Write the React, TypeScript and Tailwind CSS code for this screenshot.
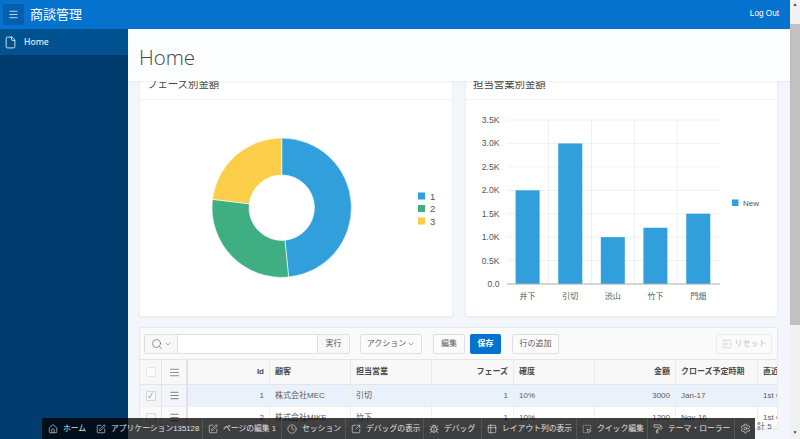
import {
  AlignJustify,
  Bug,
  ChevronDown,
  Clock,
  File,
  Home,
  Menu,
  PaintRoller,
  Search,
  Settings,
  SquareArrowLeft,
  SquareArrowOutUpRight,
  SquareDashedMousePointer,
  SquarePen,
  Table2,
} from 'lucide-react';

const FONT = "font-['Liberation_Sans','Noto_Sans_CJK_JP',sans-serif]";
const GRID_COLS = 'grid grid-cols-[22px_26px_82px_81px_81px_82px_81px_81px_82px_81px] w-[719px]';

const devItems = [
  { icon: Home, label: 'ホーム', cls: 'w-[49px] pl-[6px]' },
  { icon: SquarePen, label: 'アプリケーション135128', cls: 'w-[112px] pl-[5px] border-r border-[#555]' },
  { icon: SquarePen, label: 'ページの編集 1', cls: 'w-[79px] pl-[5px] border-r border-[#555]' },
  { icon: Clock, label: 'セッション', cls: 'w-[64px] pl-[5px] border-r border-[#555]' },
  { icon: SquareArrowOutUpRight, label: 'デバッグの表示', cls: 'w-[78px] pl-[5px] border-r border-[#555]' },
  { icon: Bug, label: 'デバッグ', cls: 'w-[58px] pl-[5px] border-r border-[#555]' },
  { icon: Table2, label: 'レイアウト列の表示', cls: 'w-[95px] pl-[5px] border-r border-[#555]' },
  { icon: SquareDashedMousePointer, label: 'クイック編集', cls: 'w-[71px] pl-[5px] border-r border-[#555]' },
  { icon: PaintRoller, label: 'テーマ・ローラー', cls: 'w-[87px] pl-[5px] border-r border-[#555]' },
];

const rows = [
  { id: 1, customer: '株式会社MEC', owner: '引切', phase: 1, rate: '10%', amount: 3000, close: 'Jan-17', recent: '1st Q' },
  { id: 2, customer: '株式会社MIKE', owner: '竹下', phase: 1, rate: '10%', amount: 1200, close: 'Nov-16', recent: '1st Q' },
];

const columns = [
  { label: 'Id', align: 'justify-end' },
  { label: '顧客', align: 'justify-start' },
  { label: '担当営業', align: 'justify-start' },
  { label: 'フェーズ', align: 'justify-end' },
  { label: '確度', align: 'justify-start' },
  { label: '金額', align: 'justify-end' },
  { label: 'クローズ予定時期', align: 'justify-start' },
  { label: '直近', align: 'justify-start' },
];

function arc(start: number, end: number, r1: number, r2: number) {
  const pt = (deg: number, r: number) => {
    const a = ((deg - 90) * Math.PI) / 180;
    return `${(Math.cos(a) * r).toFixed(2)} ${(Math.sin(a) * r).toFixed(2)}`;
  };
  const large = end - start > 180 ? 1 : 0;
  return `M${pt(start, r2)} A${r2} ${r2} 0 ${large} 1 ${pt(end, r2)} L${pt(end, r1)} A${r1} ${r1} 0 ${large} 0 ${pt(start, r1)} Z`;
}

function DonutChart() {
  const legend = [
    { label: '1', color: '#309fdb', y: 196 },
    { label: '2', color: '#3fae82', y: 208.5 },
    { label: '3', color: '#fbce4a', y: 221 },
  ];
  return (
    <svg width="314" height="216" viewBox="139 100 314 216" className="block">
      <g transform="translate(281.7 207.7)" stroke="#ffffff" strokeWidth="0.6">
        <path d={arc(0, 174.3, 32.7, 69.7)} fill="#309fdb" />
        <path d={arc(174.3, 276.9, 32.7, 69.7)} fill="#3fae82" />
        <path d={arc(276.9, 360, 32.7, 69.7)} fill="#fbce4a" />
      </g>
      {legend.map((l) => (
        <g key={l.label}>
          <rect x="418" y={l.y - 3.5} width="7" height="7" fill={l.color} />
          <text x="430" y={l.y + 3.5} fontSize="9.5" fill="#555" fontFamily="Liberation Sans">
            {l.label}
          </text>
        </g>
      ))}
    </svg>
  );
}

function BarChart() {
  const ticks = ['0.0', '0.5K', '1.0K', '1.5K', '2.0K', '2.5K', '3.0K', '3.5K'];
  const bars = [
    { label: '井下', value: 2000, x: 515.6 },
    { label: '引切', value: 3000, x: 558.3 },
    { label: '渋山', value: 1000, x: 600.8 },
    { label: '竹下', value: 1200, x: 643.4 },
    { label: '門畑', value: 1500, x: 686.3 },
  ];
  const y0 = 284;
  const perK = 164 / 3.5;
  return (
    <svg width="313" height="216" viewBox="465 100 313 216" className="block">
      {ticks.map((t, i) => (
        <g key={t}>
          {i > 0 && <line x1="507" x2="720" y1={y0 - i * 0.5 * perK} y2={y0 - i * 0.5 * perK} stroke="#eef0f2" strokeWidth="1" />}
          <text x="499.5" y={y0 - i * 0.5 * perK + 3} textAnchor="end" fontSize="8.6" fill="#555" fontFamily="Liberation Sans">
            {t}
          </text>
        </g>
      ))}
      {[548.5, 591.5, 634.5, 677].map((x) => (
        <line key={x} x1={x} x2={x} y1="120" y2={y0} stroke="#eef0f2" strokeWidth="1" />
      ))}
      {bars.map((b) => (
        <g key={b.label}>
          <rect x={b.x} y={y0 - (b.value / 1000) * perK} width="24" height={(b.value / 1000) * perK} fill="#309fdb" />
          <text x={b.x + 12} y="299" textAnchor="middle" fontSize="8" fill="#555" fontFamily="Noto Sans CJK JP">
            {b.label}
          </text>
        </g>
      ))}
      <line x1="507" x2="720" y1={y0} y2={y0} stroke="#a9abad" strokeWidth="1" />
      <rect x="732" y="199.5" width="6.5" height="6.5" fill="#309fdb" />
      <text x="743" y="205.5" fontSize="8" fill="#555" fontFamily="Liberation Sans">
        New
      </text>
    </svg>
  );
}

function ChartCard({ title, children }: { title: string; children: React.ReactNode }) {
  return (
    <section className="bg-white border border-[#eaeff3] rounded-[1px] shadow-[0_1px_2px_rgba(0,0,0,0.04)]">
      <h2 className="h-[31px] pl-[7px] pt-[2px] flex items-center border-b border-[#f0f2f4] text-[10.4px] text-[#444] font-normal">
        {title}
      </h2>
      <div className="-ml-px">{children}</div>
    </section>
  );
}

function ToolButton({ children, className = '' }: { children: React.ReactNode; className?: string }) {
  return (
    <button className={`h-[20px] flex items-center justify-center border border-[#dfdfdf] bg-[#fbfbfb] text-[8px] text-[#5a5a5a] rounded-[2px] ${className}`}>
      {children}
    </button>
  );
}

function DataGrid() {
  return (
    <section className="mt-[10px] bg-white border border-[#e6ebef] overflow-hidden">
      <div className="h-[31px] flex items-center bg-[#fafafa] pl-[4px]">
        <div className="w-[206px] h-[20px] flex border border-[#dfdfdf] rounded-[2px] bg-white">
          <div className="w-[33px] flex items-center justify-center gap-[1px] bg-[#f8f8f8] border-r border-[#dfdfdf] text-[#666]">
            <Search size={12} strokeWidth={1.4} />
            <ChevronDown size={8} strokeWidth={1.6} />
          </div>
          <div className="flex-1" />
          <div className="w-[32px] flex items-center justify-center bg-[#f8f8f8] border-l border-[#dfdfdf] text-[8px] text-[#5a5a5a]">
            実行
          </div>
        </div>
        <ToolButton className="ml-[10px] w-[62px] gap-[1px]">
          アクション
          <ChevronDown size={8} strokeWidth={1.6} />
        </ToolButton>
        <ToolButton className="ml-[11px] w-[32px]">編集</ToolButton>
        <button className="ml-[5px] w-[31px] h-[20px] bg-[#0572ce] text-white text-[8px] font-bold rounded-[2px]">保存</button>
        <ToolButton className="ml-[11px] w-[47px]">行の追加</ToolButton>
        <ToolButton className="ml-[157px] w-[56px] gap-[3px] text-[#bdbdbd] border-[#ececec]">
          <SquareArrowLeft size={10} strokeWidth={1.3} />
          リセット
        </ToolButton>
      </div>
      <div className={`${GRID_COLS} h-[26px] bg-[#f8f8f8] border-y border-[#e4e4e4]`}>
        <div className="flex items-center justify-center border-r border-[#e4e4e4]">
          <span className="w-[10px] h-[10px] bg-white border border-[#e6e6e6] rounded-[1px]" />
        </div>
        <div className="flex items-center justify-center border-r-2 border-[#e0e0e0]">
          <AlignJustify size={11} className="text-[#888]" strokeWidth={2} />
        </div>
        {columns.map((c) => (
          <div key={c.label} className={`flex items-center px-[5px] border-r border-[#e8e8e8] text-[8px] font-bold text-[#4a4a4a] whitespace-nowrap ${c.align}`}>
            {c.label}
          </div>
        ))}
      </div>
      {rows.map((r, i) => {
        const sel = i === 0;
        const side = `flex items-center justify-center ${sel ? 'bg-[#f2f5f9]' : 'bg-[#fafafa]'}`;
        const td = `flex items-center px-[5px] border-r border-[#eeeeee] text-[8px] text-[#5a5a5a] whitespace-nowrap overflow-hidden ${sel ? 'bg-[#e9f1fc]' : 'bg-white'}`;
        return (
          <div key={r.id} className={`${GRID_COLS} h-[22px] border-b border-[#eeeeee]`}>
            <div className={`${side} border-r border-[#e4e4e4]`}>
              <span className="w-[10px] h-[10px] flex items-center justify-center bg-[#f8f8f8] border border-[#d6d6d6] rounded-[1px] text-[7px] leading-none text-[#888]">
                {sel ? '✓' : ''}
              </span>
            </div>
            <div className={`${side} border-r-2 border-[#e0e0e0]`}>
              <Menu size={11} className="text-[#555]" strokeWidth={1.6} />
            </div>
            <div className={`${td} justify-end`}>{r.id}</div>
            <div className={td}>{r.customer}</div>
            <div className={td}>{r.owner}</div>
            <div className={`${td} justify-end`}>{r.phase}</div>
            <div className={td}>{r.rate}</div>
            <div className={`${td} justify-end`}>{r.amount}</div>
            <div className={td}>{r.close}</div>
            <div className={td}>{r.recent}</div>
          </div>
        );
      })}
    </section>
  );
}

function DevBar() {
  return (
    <div className="absolute left-[42px] bottom-0 h-[21px] w-[713px] flex items-center bg-black/75 text-[#e0e0e0] text-[7.8px] whitespace-nowrap">
      {devItems.map((item) => {
        const Icon = item.icon;
        return (
          <div key={item.label} className={`h-full shrink-0 flex items-center gap-[5px] ${item.cls}`}>
            <Icon size={10} strokeWidth={1.5} />
            <span>{item.label}</span>
          </div>
        );
      })}
      <div className="h-full w-[20px] shrink-0 flex items-center justify-center">
        <Settings size={11} strokeWidth={1.5} />
      </div>
    </div>
  );
}

export default function App() {
  return (
    <div className={`relative w-[800px] h-[439px] flex overflow-hidden bg-[#f3f7fb] ${FONT}`}>
      <div className="w-[790px] flex flex-col">
        <header className="h-[29px] shrink-0 flex items-center bg-[#0572ce] text-white pl-[3px] pr-[11px]">
          <button className="w-[21px] h-[21px] flex items-center justify-center bg-[#055fac] rounded-[1px]">
            <Menu size={11} strokeWidth={1.6} />
          </button>
          <span className="ml-[6px] text-[13px]">商談管理</span>
          <span className="ml-auto text-[8.2px]">Log Out</span>
        </header>
        <div className="flex-1 min-h-0 flex">
          <aside className="w-[128px] shrink-0 bg-[#003c6d]">
            <div className="h-[26px] flex items-center bg-[#00518f] text-white pl-[4px] gap-[7px]">
              <File size={13} strokeWidth={1.5} />
              <span className="font-['Noto_Sans',sans-serif] font-medium text-[8.6px] text-[#e4eef6]">Home</span>
            </div>
          </aside>
          <main className="flex-1 min-w-0 flex flex-col">
            <div className="relative z-10 h-[52px] shrink-0 flex items-center pl-[11px] pt-[4px] bg-[#fcfdfe] shadow-[0_1px_2px_rgba(0,0,0,0.06)]">
              <h1 className="font-['Open_Sans','Liberation_Sans',sans-serif] font-light text-[20.5px] text-[#444]">Home</h1>
            </div>
            <div className="flex-1 min-h-0 overflow-hidden pl-[11px] pr-[12px]">
              <div className="-mt-[13px]">
                <div className="grid grid-cols-[314px_313px] gap-x-[12px]">
                  <ChartCard title="フェーズ別金額">
                    <DonutChart />
                  </ChartCard>
                  <ChartCard title="担当営業別金額">
                    <BarChart />
                  </ChartCard>
                </div>
                <DataGrid />
              </div>
            </div>
          </main>
        </div>
      </div>
      <div className="w-[10px] shrink-0 flex flex-col items-center bg-[#f1f1f1]">
        <span className="h-[10px] flex items-center text-[5px] text-[#444]">▲</span>
        <div className="mt-[14px] w-full h-[301px] bg-[#c1c1c1]" />
        <span className="mt-auto h-[12px] flex items-center text-[5px] text-[#444]">▼</span>
      </div>
      <DevBar />
      <span className="absolute left-[757px] bottom-[6px] text-[8px] text-[#5a5a5a]">計 5</span>
    </div>
  );
}
